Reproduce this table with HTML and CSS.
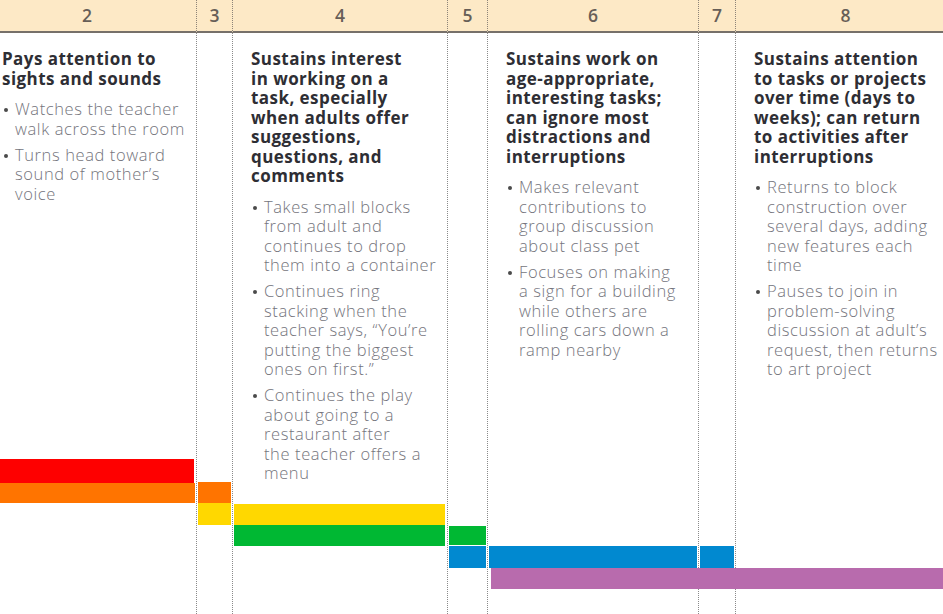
FILE: index.html
```html
<!DOCTYPE html>
<html lang="en">
<head>
<meta charset="utf-8">
<title>Attention continuum</title>
<link rel="stylesheet" href="styles.css">
</head>
<body>
<div class="chart">
  <div class="num k1">2</div>
  <div class="num k2">3</div>
  <div class="num k3">4</div>
  <div class="num k4">5</div>
  <div class="num k5">6</div>
  <div class="num k6">7</div>
  <div class="num k7">8</div>

  <div class="col k1">
    <h3>Pays attention to<br>sights and sounds</h3>
    <ul>
      <li>Watches the teacher<br>walk across the room</li>
      <li>Turns head toward<br>sound of mother’s<br>voice</li>
    </ul>
  </div>
  <div class="col k2"></div>
  <div class="col k3">
    <h3>Sustains interest<br>in working on a<br>task, especially<br>when adults offer<br>suggestions,<br>questions, and<br>comments</h3>
    <ul>
      <li>Takes small blocks<br>from adult and<br>continues to drop<br>them into a container</li>
      <li>Continues ring<br>stacking when the<br>teacher says, “You’re<br>putting the biggest<br>ones on first.”</li>
      <li>Continues the play<br>about going to a<br>restaurant after<br>the teacher offers a<br>menu</li>
    </ul>
  </div>
  <div class="col k4"></div>
  <div class="col k5">
    <h3>Sustains work on<br>age-appropriate,<br>interesting tasks;<br>can ignore most<br>distractions and<br>interruptions</h3>
    <ul>
      <li>Makes relevant<br>contributions to<br>group discussion<br>about class pet</li>
      <li>Focuses on making<br>a sign for a building<br>while others are<br>rolling cars down a<br>ramp nearby</li>
    </ul>
  </div>
  <div class="col k6"></div>
  <div class="col k7">
    <h3>Sustains attention<br>to tasks or projects<br>over time (days to<br>weeks); can return<br>to activities after<br>interruptions</h3>
    <ul>
      <li>Returns to block<br>construction over<br>several days, adding<br>new features each<br>time</li>
      <li>Pauses to join in<br>problem-solving<br>discussion at adult’s<br>request, then returns<br>to art project</li>
    </ul>
  </div>

  <div class="bars">
    <div class="bar red r1 g2"></div>
    <div class="bar orange r2 g2"></div>
    <div class="bar orange r2 g3"></div>
    <div class="bar yellow r3 g3"></div>
    <div class="bar yellow r3 g4"></div>
    <div class="bar green r4 g4"></div>
    <div class="bar green r4 g5"></div>
    <div class="bar blue r5 g5"></div>
    <div class="bar blue r5 g6"></div>
    <div class="bar blue r5 g7"></div>
    <div class="bar purple r6 g68"></div>
  </div>
</div>
</body>
</html>
```
FILE: styles.css
```css
html, body {
  margin: 0;
  padding: 0;
  background: #fff;
}
body {
  width: 943px;
  height: 614px;
  overflow: hidden;
  font-family: "Open Sans", "Liberation Sans", sans-serif;
}
.chart {
  display: grid;
  grid-template-columns: 196px 36px 215px 40px 211px 37px 208px;
  grid-template-rows: 33px 581px;
  width: 943px;
  height: 614px;
  overflow: hidden;
}
.k1 { grid-column: 1; }
.k2 { grid-column: 2; }
.k3 { grid-column: 3; }
.k4 { grid-column: 4; }
.k5 { grid-column: 5; }
.k6 { grid-column: 6; }
.k7 { grid-column: 7; }
.num {
  grid-row: 1;
  background: #fde9c6;
  border-left: 1px dotted #8c8378;
  border-bottom: 2px solid #76706a;
  display: flex;
  align-items: center;
  justify-content: center;
  font-size: 17.5px;
  font-weight: 600;
  color: #675e57;
  line-height: 1;
}
.num.k1 {
  border-left: none;
  padding-right: 22px;
}
.num.k7 {
  padding-left: 12px;
}
.col {
  grid-row: 2;
  border-left: 1px dotted #8a8a8a;
  padding: 16px 0 0 18px;
  color: #333;
  min-width: 0;
}
.col.k1 {
  border-left: none;
  padding-left: 2px;
}
h3 {
  margin: 0 0 11px;
  font-size: 17px;
  font-weight: 700;
  letter-spacing: 0.45px;
  line-height: 19.5px;
  color: #2e2e34;
  white-space: nowrap;
}
ul {
  list-style: none;
  margin: 0;
  padding: 0;
}
li {
  position: relative;
  padding-left: 13px;
  margin-bottom: 6.5px;
  font-size: 16.5px;
  font-weight: 300;
  letter-spacing: 0.6px;
  line-height: 19.5px;
  color: #74747c;
  white-space: nowrap;
}
li::before {
  content: "";
  position: absolute;
  left: 2px;
  top: 9px;
  width: 4px;
  height: 4px;
  border-radius: 50%;
  background: #4a4a4a;
}
.bars {
  grid-row: 2;
  grid-column: 1 / -1;
  align-self: start;
  margin-top: 426px;
  display: grid;
  grid-template-columns: 196px 36px 215px 40px 211px 37px 208px;
  grid-template-rows: 24px 20px 22px 21px 22px 21px;
}
.r1 { grid-row: 1; }
.r2 { grid-row: 2; }
.r3 { grid-row: 3; }
.r4 { grid-row: 4; }
.r5 { grid-row: 5; }
.r6 { grid-row: 6; }
.g2 { grid-column: 1; margin-right: 1px; }
.g3 { grid-column: 2; margin: 0 1px 0 2px; }
.g4 { grid-column: 3; margin: 0 2px 0 2px; }
.g5 { grid-column: 4; margin: 0 1px 0 2px; }
.g6 { grid-column: 5; margin: 0 1px 0 2px; }
.g7 { grid-column: 6; margin: 0 1px 0 2px; }
.g68 { grid-column: 5 / 8; margin-left: 4px; }
.red { background: #fe0000; }
.orange { background: #ff7400; }
.yellow { background: #ffd800; }
.green { background: #00b833; }
.blue { background: #0189d0; }
.purple { background: #b86bad; }
.red.g2 { margin-right: 2px; }
.orange.g3 { margin-top: -1px; }
.yellow.g4 { margin-top: 1px; }
.green.g4 { margin-left: 2px; }
.green.g5 { margin-top: 1px; margin-bottom: 1px; }
```
